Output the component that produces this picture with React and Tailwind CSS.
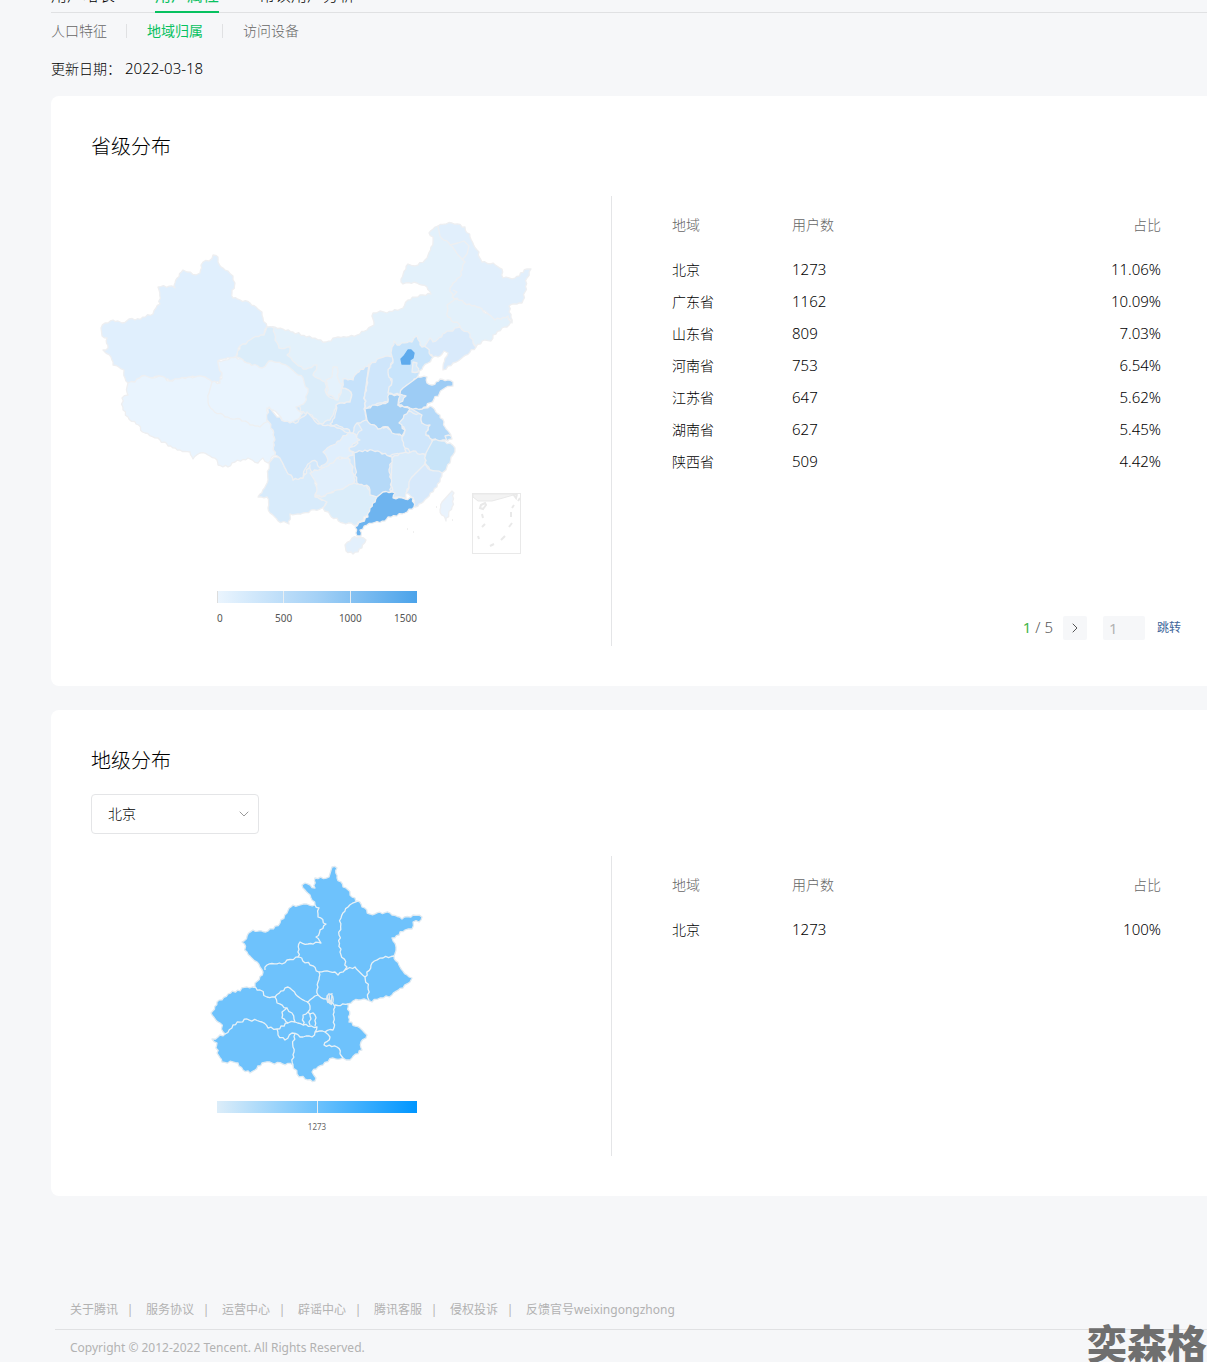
import React from 'react';
import { ChevronDown, ChevronRight } from 'lucide-react';

const PROVINCES = [
    { name: '北京', users: 1273, share: '11.06%' },
    { name: '广东省', users: 1162, share: '10.09%' },
    { name: '山东省', users: 809, share: '7.03%' },
    { name: '河南省', users: 753, share: '6.54%' },
    { name: '江苏省', users: 647, share: '5.62%' },
    { name: '湖南省', users: 627, share: '5.45%' },
    { name: '陕西省', users: 509, share: '4.42%' }
];

const CITIES = [{ name: '北京', users: 1273, share: '100%' }];

const FOOTER_LINKS = ['关于腾讯', '服务协议', '运营中心', '辟谣中心', '腾讯客服', '侵权投诉', '反馈官号weixingongzhong'];

// painted in order, later regions cover the edges of earlier ones
const CHINA = [
    { id: 'base', fill: '#d3e8fb', d: '300,385 365,362 398,380 408,400 430,420 438,450 425,485 385,493 330,490 290,465 290,420' },
    { id: 'neimenggu', fill: '#e3f1fb', d: '267,327 283,329 293,332 312,338 326,342 338,337 357,335 367,330 374,325 373,319 373,313 380,311 387,313 403,308 408,300 420,295 431,294 427,287 417,283 403,284 401,282 408,264 415,266 425,260 433,242 433,237 429,233 438,226 447,230 458,252 465,262 466,280 462,300 462,326 445,342 425,350 400,362 380,365 357,378 343,395 320,392 300,370 282,352 270,340' },
    { id: 'heilongjiang', fill: '#e1effc', d: '438,226 452,223 465,227 470,237 477,250 482,262 493,263 502,269 503,278 515,278 527,269 531,269 527,278 525,292 522,303 509,306 512,323 508,318 495,320 488,314 477,307 457,302 453,297 450,288 460,277 465,262 458,255 450,245 440,236' },
    { id: 'jilin', fill: '#e3f1fb', d: '457,298 464,303 477,307 488,314 495,320 508,316 511,322 507,327 502,328 493,335 491,341 485,340 476,347 468,337 460,326 448,317 447,305' },
    { id: 'liaoning', fill: '#d9eafb', d: '430,338 433,342 445,333 460,327 470,334 473,343 476,347 463,357 453,363 443,370 443,367 448,353 444,351 438,357 433,357 423,349' },
    { id: 'xinjiang', fill: '#e0effd', d: '101,328 105,323 113,320 118,321 122,323 129,319 135,320 153,314 156,308 160,304 159,290 158,287 172,286 175,288 175,283 183,270 187,272 196,275 200,273 201,265 203,262 209,261 213,255 218,257 218,262 223,268 228,271 233,276 235,283 232,293 233,298 250,303 262,312 263,318 267,327 264,335 253,338 246,344 240,346 236,357 218,361 219,367 222,373 220,383 212,382 205,377 190,377 170,381 159,376 152,378 142,376 135,382 128,383 125,378 124,370 113,365 111,357 103,350 108,348 107,338 102,336' },
    { id: 'xizang', fill: '#e9f4fe', d: '128,383 135,382 142,376 152,378 159,376 170,381 190,377 205,377 212,382 220,395 250,405 267,420 273,430 275,455 268,463 263,458 258,463 248,458 235,462 228,467 218,465 217,460 208,455 200,453 193,459 190,452 180,450 168,446 160,440 145,433 136,424 128,417 123,410 122,398 128,395 127,387' },
    { id: 'gansu', fill: '#dbedfa', d: '267,327 274,328 275,340 279,348 290,347 290,350 287,355 303,369 317,365 313,375 325,382 327,395 337,400 342,388 351,392 350,402 336,405 330,420 320,424 312,415 300,412 295,385 262,372 236,357 240,346 246,344 253,338 264,335' },
    { id: 'ningxia', fill: '#e5f2fc', d: '333,367 337,367 337,375 342,387 338,400 328,395 326,380 332,377' },
    { id: 'qinghai', fill: '#e9f4fe', d: '212,382 220,383 222,373 219,367 218,361 236,357 247,363 262,368 269,361 282,364 290,368 303,378 308,392 305,402 296,407 303,413 293,423 282,420 273,410 267,408 267,422 260,427 250,425 240,419 225,417 213,410 208,402 209,393' },
    { id: 'yunnan', fill: '#d8ebfb', d: '274,457 280,458 293,480 303,478 310,465 317,488 315,497 327,502 322,508 303,513 290,514 289,524 278,521 270,513 267,497 258,497 268,480 269,463' },
    { id: 'guizhou', fill: '#e1effc', d: '310,473 322,468 337,458 348,458 353,467 354,483 343,489 330,493 322,497 315,495 317,484' },
    { id: 'guangxi', fill: '#dbedfa', d: '315,496 322,497 330,493 343,489 354,483 367,483 370,493 378,497 372,510 357,525 343,523 330,515 323,508 327,502' },
    { id: 'hubei', fill: '#cfe6fb', d: '365,420 357,423 362,430 357,435 358,443 349,448 355,455 367,451 390,456 406,452 406,438 392,430 378,425' },
    { id: 'chongqing', fill: '#e0effd', d: '347,433 353,433 360,440 349,448 353,455 347,458 337,458 328,466 322,468 321,458 323,450' },
    { id: 'sichuan', fill: '#cfe6fb', d: '269,407 267,420 273,430 275,455 280,458 293,480 303,478 305,469 312,461 317,462 320,468 328,460 323,452 333,445 348,433 337,428 328,425 318,424 307,412 298,422 290,423 277,417' },
    { id: 'shaanxi', fill: '#c6e2fb', d: '369,364 357,373 353,380 343,379 342,388 351,392 350,402 336,405 335,415 330,424 342,427 353,433 357,423 366,420 364,409 365,393' },
    { id: 'shanxi', fill: '#cfe6fb', d: '370,365 380,358 393,356 390,372 392,382 388,402 375,405 365,409 365,393 367,380' },
    { id: 'hebei', fill: '#c8e4fb', d: '392,347 394,341 397,345 412,342 417,336 420,342 422,347 427,348 433,357 428,363 423,367 418,376 403,390 400,395 388,393 392,382 388,372 393,360 391,353' },
    { id: 'anhui', fill: '#cfe6fb', d: '408,411 422,415 422,423 430,425 426,435 435,442 427,455 413,453 405,448 402,437 405,430 399,423 402,415' },
    { id: 'jiangsu', fill: '#b5d9f8', d: '410,408 422,409 430,406 440,415 445,427 451,435 448,441 437,441 426,435 430,425 422,423 422,415' },
    { id: 'henan', fill: '#a4d0f5', d: '365,409 375,405 388,402 389,394 400,396 398,405 410,409 404,415 399,423 405,430 402,436 392,433 388,427 378,429 367,420' },
    { id: 'shandong', fill: '#9dccf5', d: '418,377 427,377 427,383 432,385 440,379 453,382 453,386 445,388 430,403 422,409 410,408 398,405 406,396 400,394 403,388' },
    { id: 'jiangxi', fill: '#d9ebfa', d: '392,458 403,453 413,451 425,455 425,465 412,477 407,492 406,498 393,498 391,485' },
    { id: 'zhejiang', fill: '#c8e4f9', d: '433,440 450,443 455,448 453,455 450,463 442,473 430,470 425,463 426,453' },
    { id: 'fujian', fill: '#d7e9fb', d: '425,464 430,470 442,473 437,487 427,498 415,507 413,498 406,493 412,477' },
    { id: 'shanghai', fill: '#b9dcf8', d: '445,436 449,435 452,439 447,441' },
    { id: 'hunan', fill: '#b5d9f8', d: '354,453 365,450 380,452 392,457 390,467 391,492 382,495 377,497 370,495 369,487 357,483 355,467' },
    { id: 'guangdong', fill: '#6eb4ef', d: '383,492 395,493 393,498 405,499 413,498 414,507 405,513 388,517 385,521 367,525 360,530 361,536 357,536 355,527 368,517 370,508 377,497' },
    { id: 'tianjin', fill: '#d9ebfa', d: '413,362 417,363 418,372 412,372' },
    { id: 'beijing', fill: '#5fabed', d: '408,350 411,350 414,353 413,358 410,360 410,364 402,364 401,359 404,356' },
    { id: 'hainan', fill: '#e3f0fc', d: '345,545 352,538 360,537 366,540 362,548 353,554 346,551' },
    { id: 'taiwan', fill: '#e9f3fd', d: '452,491 454,493 452,507 446,521 440,510 442,502' }
];

const BEIJING_OUTLINE = '332,867 337,868 337,878 343,887 355,898 362,907 370,914 390,913 402,919 413,915 422,917 419,922 413,922 412,929 405,930 392,938 396,947 394,956 400,967 407,975 412,978 410,982 403,988 392,995 380,998 372,1002 367,1000 353,1001 348,1004 349,1022 360,1028 367,1035 361,1042 362,1050 350,1060 343,1058 333,1058 323,1065 312,1072 316,1078 315,1081 305,1079 297,1074 293,1065 272,1063 262,1063 250,1073 243,1070 238,1063 222,1062 217,1053 217,1043 212,1039 218,1037 225,1034 220,1023 211,1013 217,1002 228,994 247,987 255,987 255,983 263,972 257,962 247,952 242,942 253,930 268,931 280,923 287,913 293,905 315,905 310,895 302,885 305,883 315,888 315,878 329,877';

const BEIJING_BORDERS = [
    '315,905 319,908 318,917 326,924 316,937 321,943 308,944 300,942 298,957',
    '265,970 267,965 282,964 287,960 299,957 310,965 319,972 335,972 338,975 347,967 340,952 339,935 341,918 348,907 358,901',
    '345,970 355,967 365,977 368,987 369,1000',
    '365,977 372,963 383,958 394,956',
    '319,972 318,982 318,995 308,1002 300,998 288,987 275,997 267,997 260,990 253,987',
    '318,995 327,999 335,1007 334,1017 333,1030 325,1032 315,1032',
    '335,1005 348,1004',
    '275,997 277,1003 287,1008 282,1012 282,1018 288,1023 295,1022 303,1025 303,1015 308,1012 310,1006 307,1002',
    '287,1008 292,1013 295,1022',
    '225,1034 233,1025 247,1019 262,1022 268,1028 277,1029 288,1023',
    '277,1029 278,1035 285,1040 292,1033 300,1037 312,1037 315,1032 317,1027 303,1025',
    '295,1034 293,1047 293,1065',
    '325,1032 330,1037 324,1045 337,1047 343,1058',
    '308,1012 315,1015 315,1026',
    '310,1013 310,1025'
];

// break straight segments into short uneven steps, so borders look surveyed
const rough = (points, amount) => {
    const list = points.split(' ').map(p => p.split(',').map(Number));
    const out = [];
    list.forEach(([x, y], i) => {
        out.push(`${x},${y}`);
        const next = list[i + 1];
        if (!next) return;
        const [dx, dy] = [next[0] - x, next[1] - y];
        const len = Math.hypot(dx, dy);
        const steps = Math.floor(len / 2.5);
        for (let s = 1; s < steps; s++) {
            const px = x + (dx * s) / steps;
            const py = y + (dy * s) / steps;
            const off = Math.sin(Math.round(px) * 12.9 + Math.round(py) * 78.2) * amount;
            out.push(`${(px - (dy / len) * off).toFixed(1)},${(py + (dx / len) * off).toFixed(1)}`);
        }
    });
    return out.join(' ');
};

const ChinaMap = () => (
    <svg viewBox="91 196 452 395" className="block w-full" role="img" aria-label="省级分布地图">
        <g stroke="#eeeff1" strokeWidth="1.3" strokeLinejoin="round">
            {CHINA.map(r => <polygon key={r.id} points={rough(r.d, r.id === 'beijing' ? 0 : 1.1)} fill={r.fill} stroke={r.id === 'beijing' ? r.fill : undefined} />)}
            <polyline points="450,245 458,243 464,241 469,246 467,254 462,260" fill="none" />
            <polyline points="453,290 457,292 452,297 457,300" fill="none" />
        </g>
        <g fill="#f3f3f3" stroke="#e9e9e9" strokeWidth="1">
            <rect x="472.5" y="493.5" width="48" height="60" fill="none" />
            <path d="M473 494H517L503 498L492 501L478 501L473 497Z" />
            <path d="M513 494l3 4 1-4M518 501l2-3M481 505l4-2 1 2-3 4-3-1zM482 514l1 4M482 527l3-3M478 536l1 3M490 546l4-2M501 540l4-4M509 527l3-4M511 512v5M512 508l2-3" fill="none" strokeWidth="2" />
            <path d="M407 529h1M413 532h1M436 507h1M452 520h1" stroke="#e0e0e0" />
        </g>
    </svg>
);

const BeijingMap = () => (
    <svg viewBox="91 856 452 245" className="block w-full" role="img" aria-label="北京地图">
        <g stroke="#dfeaf2" strokeWidth="1.3" strokeLinejoin="round" fill="none">
            <polygon points={rough(BEIJING_OUTLINE, 1.3)} fill="#6ec2fc" />
            {BEIJING_BORDERS.map(d => <polyline key={d} points={rough(d, 1.2)} stroke="#e8f1f6" />)}
            <path d="M327 995l2 8M329 993l1 11M332 993l-1 12M328 1003q-3-7 1-9M330 994q4 1 3 8l-2 3M327 999l3 5" />
        </g>
    </svg>
);

const RegionTable = ({ rows }) => (
    <div className="pt-3 pr-[46px]">
        <table className="w-full table-fixed text-sm">
            <thead>
                <tr className="h-[34px] text-[#666666]">
                    <th className="w-[120px] text-left font-light">地域</th>
                    <th className="text-left font-light">用户数</th>
                    <th className="text-right font-light">占比</th>
                </tr>
                <tr className="h-3"></tr>
            </thead>
            <tbody>
                {rows.map(row => (
                    <tr key={row.name} className="h-8">
                        <td>{row.name}</td>
                        <td className="text-[15px]">{row.users}</td>
                        <td className="text-right text-[15px]">{row.share}</td>
                    </tr>
                ))}
            </tbody>
        </table>
    </div>
);

const App = () => {
    return (
        <div className="flex min-h-screen flex-col bg-[#f6f7f9] pl-[51px] font-['Noto_Sans','Noto_Sans_CJK_SC',sans-serif] text-sm font-light text-black">
            <nav className="flex h-[13px] items-end gap-10 border-b border-[#e0e1e3] text-base leading-4">
                <a href="#growth" className="-mb-px pb-2.5">用户增长</a>
                <a href="#attributes" className="-mb-px border-b-2 border-[#07c160] pb-2 font-normal text-[#07c160]">用户属性</a>
                <a href="#regulars" className="-mb-px pb-2.5">常读用户分析</a>
            </nav>

            <nav className="flex h-9 items-center text-[#666666]">
                <a href="#people">人口特征</a>
                <span className="ml-[19px] mr-5 h-3.5 w-px bg-[#e0e1e3]"></span>
                <a href="#region" className="font-normal text-[#07c160]">地域归属</a>
                <span className="ml-[19px] mr-5 h-3.5 w-px bg-[#e0e1e3]"></span>
                <a href="#device">访问设备</a>
            </nav>

            <p className="flex h-[47px] items-center gap-1 pb-[7px]"><span>更新日期：</span><span className="text-[15px]">2022-03-18</span></p>

            <section className="rounded-l-lg bg-white pt-9 pb-10 pl-10">
                <h2 className="pt-0.5 text-xl leading-[26px]">省级分布</h2>
                <div className="mt-9 flex min-h-[450px]">
                    <div className="w-[520px] shrink-0">
                        <div className="w-[452px]">
                            <ChinaMap />
                            <div className="mx-auto w-[200px]">
                                <div className="flex h-3 justify-between bg-linear-to-r/srgb from-[#ebf5fe] via-[#a4d1f6] to-[#4ba3ea]">
                                    <span className="w-px bg-[#dddddd]"></span>
                                    <span className="w-px bg-[#e8eef2]"></span>
                                    <span className="w-px bg-[#e8eef2]"></span>
                                    <span className="w-px"></span>
                                </div>
                                <div className="mt-2 grid grid-cols-6 text-[10px] leading-[14px] font-normal text-[#555555]">
                                    <span>0</span>
                                    <span className="col-span-2 text-center">500</span>
                                    <span className="col-span-2 text-center">1000</span>
                                    <span className="text-right">1500</span>
                                </div>
                            </div>
                        </div>
                    </div>
                    <div className="flex flex-1 flex-col justify-between border-l border-[#e4e5e7] pl-[60px]">
                        <RegionTable rows={PROVINCES} />
                        <div className="mb-1.5 flex h-6 items-center justify-end pr-[26px] text-[15px] text-[#555555]">
                            <span><span className="font-normal text-[#44b549]">1</span> / 5</span>
                            <button aria-label="下一页" className="ml-2.5 flex h-6 w-6 items-center justify-center rounded-xs bg-[#f6f7f9]"><ChevronRight size={16} strokeWidth={1.5} /></button>
                            <input aria-label="页码" defaultValue="1" className="ml-4 h-6 w-[42px] rounded-xs bg-[#f6f7f9] px-1.5 font-normal text-[#b2b2b2] outline-none" />
                            <button className="ml-3 text-xs font-normal text-[#406599]">跳转</button>
                        </div>
                    </div>
                </div>
            </section>

            <section className="mt-6 rounded-l-lg bg-white pt-9 pb-10 pl-10">
                <h2 className="pt-0.5 text-xl leading-[26px]">地级分布</h2>
                <div className="relative mt-5 w-[168px]">
                    <select aria-label="选择省份" className="h-10 w-full appearance-none rounded-sm border border-[#e4e5e7] bg-white px-4 outline-none">
                        <option>北京</option>
                    </select>
                    <ChevronDown size={16} strokeWidth={1.5} className="pointer-events-none absolute top-3 right-[7px] text-[#9a9a9a]" />
                </div>
                <div className="mt-[22px] flex min-h-[300px]">
                    <div className="w-[520px] shrink-0">
                        <div className="w-[452px]">
                            <BeijingMap />
                            <div className="mx-auto w-[200px]">
                                <div className="flex h-3 justify-center bg-linear-to-r/srgb from-[#dcedf9] via-[#6ec2fc] to-[#0096ff]">
                                    <span className="w-px bg-[#e8eef2]"></span>
                                </div>
                                <p className="mt-2 text-center text-[8px] leading-3 font-normal text-[#666666]">1273</p>
                            </div>
                        </div>
                    </div>
                    <div className="flex-1 border-l border-[#e4e5e7] pl-[60px]">
                        <RegionTable rows={CITIES} />
                    </div>
                </div>
            </section>

            <footer className="relative mt-auto pl-1 text-xs font-normal text-[#b2b2b2]">
                <ul className="flex h-[38px] items-center pl-[15px]">
                    {FOOTER_LINKS.map((link, i) => (
                        <li key={link} className="flex items-center">
                            {i > 0 && <span className="w-7 pr-1 text-center">|</span>}
                            <a href="#footer">{link}</a>
                        </li>
                    ))}
                </ul>
                <p className="flex h-[33px] items-center border-t border-[#e0e1e3] pt-1 pl-[15px]">Copyright © 2012-2022 Tencent. All Rights Reserved.</p>
                <span className="absolute right-0 bottom-0 text-[40px] leading-9 font-black text-[#6f6f6f]">奕森格</span>
            </footer>
        </div>
    );
};

export default App;
